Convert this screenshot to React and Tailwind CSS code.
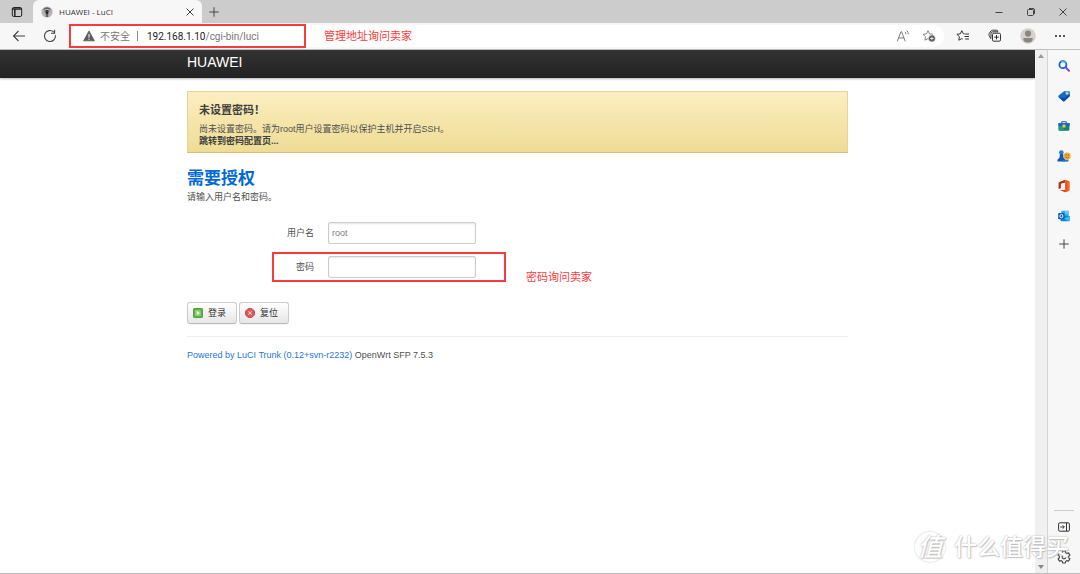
import React from 'react';

const TabMenuIcon = () => (
  <svg viewBox="0 0 12 12" className="h-3 w-3" fill="none" stroke="#222" strokeWidth="1">
    <rect x="1.3" y="1.5" width="9.4" height="9" rx="1.5" />
    <path d="M1.3 3h9.4M3.8 3v7.5" strokeWidth="1.5" />
  </svg>
);

const RouterIcon = () => (
  <svg viewBox="0 0 12 12" className="h-3 w-3">
    <circle cx="6" cy="6" r="5.6" fill="#b4b4b4" />
    <path d="M2.6 3.6Q6 .4 9.4 3.6M3.6 5.4Q6 3.2 8.4 5.4" fill="none" stroke="#333" strokeWidth="1" />
    <circle cx="6" cy="6.4" r="1.5" fill="#222" />
    <path d="M4.8 8h2.4v3H4.8z" fill="#666" />
  </svg>
);

const CloseIcon = ({ className }) => (
  <svg viewBox="0 0 10 10" className={className} fill="none" stroke="#444" strokeWidth="1">
    <path d="M1.5 1.5l7 7M8.5 1.5l-7 7" />
  </svg>
);

const PlusIcon = ({ className }) => (
  <svg viewBox="0 0 10 10" className={className} fill="none" stroke="#444" strokeWidth="1">
    <path d="M5 .3v9.4M.3 5h9.4" />
  </svg>
);

const BackIcon = () => (
  <svg viewBox="0 0 14 14" className="h-3.5 w-3.5" fill="none" stroke="#444" strokeWidth="1.1">
    <path d="M13 7H1.5M6.5 2l-5 5 5 5" />
  </svg>
);

const ReloadIcon = () => (
  <svg viewBox="0 0 14 14" className="h-3.5 w-3.5" fill="none" stroke="#444" strokeWidth="1.1">
    <path d="M12.4 6.3A5.5 5.5 0 1 1 10.8 3.1M11.6.8v3.5H8" />
  </svg>
);

const WarningIcon = () => (
  <svg viewBox="0 0 12 12" className="h-3 w-3 shrink-0">
    <path d="M6 .9L11.400 10.800H.6z" fill="#5c5c5c" stroke="#5c5c5c" strokeWidth=".8" strokeLinejoin="round" />
    <path d="M6 4v3.6M6 8.7v1.1" stroke="#fff" strokeWidth="1" />
  </svg>
);

const ReadAloudIcon = () => (
  <svg viewBox="0 0 13 13" className="h-3.5 w-3.5" fill="none" stroke="#777" strokeWidth=".9">
    <path d="M1.200 11.500L4.600 2.500h.6l3.400 9M2.300 8.300h5.200M8.300 2.600q.9.9.8 2.200M10 1.400q1.600 1.500 1.400 3.600" />
  </svg>
);

const STAR = 'M6 1.2l1.5 3.1 3.4.5-2.5 2.4.6 3.5L6 9.1l-3.1 1.6.6-3.5L1 4.8l3.5-.5z';

const AddFavoriteIcon = () => (
  <svg viewBox="0 0 14 13" className="h-3.5 w-3.5" fill="none">
    <path d={STAR} stroke="#777" strokeWidth=".9" />
    <circle cx="9.9" cy="9" r="3.4" fill="#555" stroke="#fff" strokeWidth=".5" />
    <path d="M9.9 7.2v3.6M8.1 9h3.6" stroke="#fff" strokeWidth=".8" />
  </svg>
);

const FavoritesIcon = () => (
  <svg viewBox="0 0 14 13" className="h-3.5 w-3.5" fill="none" stroke="#333" strokeWidth="1">
    <path d="M8.7 4.400l-1.400-.2L5.800 1.200 4.300 4.300.9 4.800l2.500 2.400-.6 3.500 3.100-1.600.8.4M9.200 4.500H13M8.500 7H13M9.200 9.500H13" />
  </svg>
);

const CollectionsIcon = () => (
  <svg viewBox="0 0 14 14" className="h-3.5 w-3.5" fill="none" stroke="#333" strokeWidth="1">
    <rect x="4.5" y="4.2" width="8" height="8" rx="1.3" />
    <path d="M8.5 6v4.4M6.300 8.200h4.400M3.100 10L1.100 6.500Q.6 5.300 1.300 4.200L3 2Q3.600 1.200 4.600 1.200h4q1 0 1.400 1.200M3 8.600V4.600Q3 2.800 4.800 2.800h5.200" />
  </svg>
);

const AvatarIcon = () => (
  <svg viewBox="0 0 16 16" className="h-4 w-4">
    <circle cx="8" cy="8" r="7.7" fill="#d3d0cd" />
    <circle cx="8" cy="5.600" r="3.100" fill="#8b8580" />
    <path d="M3.200 10h9.600q0 4.600-4.800 4.600T3.200 10z" fill="#8b8580" />
  </svg>
);

const MoreIcon = () => (
  <svg viewBox="0 0 12 12" className="h-3 w-3" fill="#222">
    <circle cx="2" cy="6" r="1" />
    <circle cx="6" cy="6" r="1" />
    <circle cx="10" cy="6" r="1" />
  </svg>
);

const SearchIcon = () => (
  <svg viewBox="0 0 12 12" className="h-3 w-3" fill="none">
    <circle cx="4.900" cy="4.700" r="3.500" stroke="#1c62d1" strokeWidth="1.800" />
    <path d="M3 1.800a3.500 3.500 0 0 1 5 1.300" stroke="#49a5ea" strokeWidth="1.800" />
    <path d="M7.600 7.400l1.600 1.500" stroke="#3e4bd0" strokeWidth="1.800" />
    <path d="M9 8.800l2 1.900" stroke="#9747ee" strokeWidth="2.200" strokeLinecap="round" />
  </svg>
);

const ShoppingIcon = () => (
  <svg viewBox="0 0 12 12" className="h-3 w-3">
    <path d="M6.4 1h4.2q1.2 0 1.2 1.2v3.5L6.6 11q-.8.8-1.7 0L.6 7.2q-.8-.8 0-1.600z" fill="#1769ce" />
    <path d="M.5 6.900l5.600 1.400 5.700-4v1.900L6.600 11q-.8.8-1.700 0z" fill="#0a49a5" />
    <path d="M6.400 1h4.200q1.200 0 1.200 1.200v2L7.500 3z" fill="#33a8e8" />
    <circle cx="9" cy="3.500" r="1.300" fill="#ffd34d" />
  </svg>
);

const ToolsIcon = () => (
  <svg viewBox="0 0 12 12" className="h-3 w-3">
    <path d="M3.700 3.200V1.700h4.600v1.500" fill="none" stroke="#175ca8" strokeWidth="1" />
    <rect x=".2" y="2.900" width="11.600" height="3.300" rx=".7" fill="#1a66c2" />
    <path d="M.6 6.100h10.800v3.700q0 1-1 1H1.600q-1 0-1-1z" fill="#168276" />
    <path d="M.6 6.100h5.200v4.700H1.600q-1 0-1-1z" fill="#219b79" />
    <rect x="4.500" y="4.500" width="3" height="3" rx=".5" fill="#f6c344" />
  </svg>
);

const GamesIcon = () => (
  <svg viewBox="0 0 12 12" className="h-3.5 w-3.5">
    <circle cx="3.700" cy="3" r="2" fill="#2480dc" />
    <path d="M2.600 4.200h2.600l.5 3.500q1.600.8 1.600 3.100H.2q0-2.300 1.800-3.100z" fill="#1259b4" />
    <circle cx="8.700" cy="6" r="3.100" fill="#f1ac37" />
    <circle cx="7.800" cy="5.100" r=".5" fill="#a85716" />
    <circle cx="9.700" cy="5.100" r=".5" fill="#a85716" />
    <path d="M7.200 6.900q1.500 1.500 3 0" fill="none" stroke="#a85716" strokeWidth=".6" />
    <path d="M4.800 9.200h5v1.600h-5z" fill="#197bdc" />
  </svg>
);

const OfficeIcon = () => (
  <svg viewBox="0 0 12 13" className="h-3.5 w-3">
    <path d="M7.200.2l3.700 1.200q.8.3.8 1.100v8q0 .8-.8 1.100l-3.700 1.200z" fill="#f26a21" />
    <path d="M7.200.2L1.500 2.500q-.9.4-.9 1.300v5.400q0 .6.500.3l1.800-1V4.300l4.300-1.100z" fill="#b52c1c" />
    <path d="M1.800 10.300h5.400v2.500z" fill="#e63b20" />
    <path d="M7.200 3.200v7.100H1.800l5.400 2.500 2-.6V1z" fill="#d83a1d" fillOpacity=".55" />
    <path d="M3 4.500l4-1.200v6.900H2.500L3 8.500z" fill="#f8f3f0" />
  </svg>
);

const OutlookIcon = () => (
  <svg viewBox="0 0 12 12" className="h-3 w-3">
    <path d="M3.300.8h7.400V7H3.300z" fill="#31a9eb" />
    <path d="M7 .8h3.700v3H7z" fill="#5fd0f8" />
    <path d="M2.500 5.500L12 6v4.300q0 .9-.9.9H3.400q-.9 0-.9-.9z" fill="#1682d4" />
    <path d="M12 6v4.300q0 .9-.9.9L5.500 8.500z" fill="#3bc0f0" />
    <rect x=".2" y="2.900" width="6.400" height="6.400" rx=".8" fill="#0b61b7" />
    <ellipse cx="3.400" cy="6.100" rx="1.500" ry="1.700" fill="none" stroke="#fff" strokeWidth=".9" />
  </svg>
);

const HidePanelIcon = () => (
  <svg viewBox="0 0 12 10" className="h-2.5 w-3" fill="none" stroke="#333" strokeWidth="1">
    <rect x=".6" y=".8" width="10.800" height="8.400" rx="1.300" />
    <path d="M8.500 .8v8.400M2.300 5h3.800M4.700 3.300L6.400 5 4.700 6.700" />
  </svg>
);

const GearIcon = () => (
  <svg viewBox="0 0 14 14" className="h-3.5 w-3.5" fill="none" stroke="#444" strokeWidth="1.100">
    <path d="M5.700 1h2.600l.4 1.700 1.200.7 1.700-.5 1.300 2.200L11.600 6.300v1.400l1.300 1.200-1.300 2.200-1.700-.5-1.200.7-.4 1.700H5.700l-.4-1.700-1.200-.7-1.700.5-1.300-2.200 1.300-1.200V6.300L1.100 5.100l1.300-2.200 1.700.5 1.200-.7z" />
    <circle cx="7" cy="7" r="1.900" />
  </svg>
);

const LoginIcon = () => (
  <svg viewBox="0 0 11 11" className="h-2.5 w-2.5">
    <rect x=".5" y=".5" width="10" height="10" rx="1" fill="#61b544" stroke="#43933a" />
    <rect x="2.500" y="2.500" width="6" height="6" fill="#8fd474" />
    <path d="M4.200 3.300l3.300 2.200-3.300 2.200z" fill="#fff" />
  </svg>
);

const ResetIcon = () => (
  <svg viewBox="0 0 11 11" className="h-2.5 w-2.5">
    <path d="M3.500.5h4l3 3v4l-3 3h-4l-3-3v-4z" fill="#dc5757" stroke="#c04848" />
    <path d="M3.700 3.700l3.600 3.600M7.300 3.700L3.700 7.300" stroke="#f7c5c5" strokeWidth="1.200" />
  </svg>
);

const sidebarApps = [
  { name: 'Search', icon: SearchIcon },
  { name: 'Shopping', icon: ShoppingIcon },
  { name: 'Tools', icon: ToolsIcon },
  { name: 'Games', icon: GamesIcon },
  { name: 'Office', icon: OfficeIcon },
  { name: 'Outlook', icon: OutlookIcon },
];

const TabStrip = () => (
  <div className="flex h-[23px] items-center bg-[#cccccc]">
    <button aria-label="Tab actions" className="flex w-[33px] justify-center">
      <TabMenuIcon />
    </button>
    <div className="flex h-full w-[169px] items-center rounded-t-md bg-[#f7f7f7] pl-2 pr-[7px]">
      <RouterIcon />
      <span className="ml-1.5 flex-1 font-['Open_Sans',sans-serif] text-[8px] text-[#333]">HUAWEI - LuCI</span>
      <button aria-label="Close tab"><CloseIcon className="h-2.5 w-2.5" /></button>
    </div>
    <button aria-label="New tab" className="ml-[7px]"><PlusIcon className="h-2.5 w-2.5" /></button>
    <div className="ml-auto flex items-center gap-[22px] pr-3">
      <button aria-label="Minimize">
        <svg viewBox="0 0 10 10" className="h-2.5 w-2.5" stroke="#444"><path d="M1.500 5.500h7" /></svg>
      </button>
      <button aria-label="Restore">
        <svg viewBox="0 0 10 10" className="h-2.5 w-2.5" fill="none" stroke="#444">
          <rect x="1.500" y="2.500" width="6" height="6" rx="1" />
          <path d="M3 1.500h4q1.500 0 1.500 1.500v4" />
        </svg>
      </button>
      <button aria-label="Close window"><CloseIcon className="h-2.5 w-2.5" /></button>
    </div>
  </div>
);

const Toolbar = () => (
  <div className="flex h-[27px] items-center border-b border-[#bdbdbd] bg-[#f7f7f7]">
    <div className="flex w-[70px] shrink-0 items-center gap-[17px] pl-3">
      <button aria-label="Back"><BackIcon /></button>
      <button aria-label="Reload"><ReloadIcon /></button>
    </div>
    <div className="relative flex h-[22px] flex-1 items-center rounded-full bg-white pl-[13px] pr-2">
      <WarningIcon />
      <span className="ml-[5px] text-[10px] text-[#777]">不安全</span>
      <span className="ml-[7px] h-2.5 w-px bg-[#888]" />
      <div className="ml-[9px] flex-1 font-[Roboto,sans-serif] text-[10px] text-[#777]">
        <span className="text-[#222]">192.168.1.10</span>/cgi-bin/luci
      </div>
      <div className="flex gap-3">
        <button aria-label="Read aloud"><ReadAloudIcon /></button>
        <button aria-label="Add to favorites"><AddFavoriteIcon /></button>
      </div>
      <div className="absolute -left-px h-6 w-[237px] border-2 border-[#f83c3c]" />
      <span className="absolute left-[254px] text-[11px] text-[#f83c3c]">管理地址询问卖家</span>
    </div>
    <div className="flex items-center gap-[18px] pl-3 pr-3.5">
      <button aria-label="Favorites"><FavoritesIcon /></button>
      <button aria-label="Collections"><CollectionsIcon /></button>
      <button aria-label="Profile"><AvatarIcon /></button>
      <button aria-label="Settings and more"><MoreIcon /></button>
    </div>
  </div>
);

const Sidebar = () => (
  <aside className="flex w-[33px] shrink-0 flex-col items-center border-l border-[#d4d4d4] bg-[#f7f7f7] pb-[9px] pt-1">
    {sidebarApps.map((app) => (
      <button key={app.name} aria-label={app.name} className="mb-[7px] flex h-[23px] items-center last:mb-0">
        <app.icon />
      </button>
    ))}
    <button aria-label="Customize" className="flex h-5 items-center"><PlusIcon className="h-2.5 w-2.5" /></button>
    <div className="mt-auto w-5 border-t border-[#cfcfcf]" />
    <button aria-label="Hide sidebar" className="mt-[11px]"><HidePanelIcon /></button>
    <button aria-label="Sidebar settings" className="mt-[18px]"><GearIcon /></button>
  </aside>
);

const Scrollbar = () => (
  <div className="flex w-3 shrink-0 flex-col items-center justify-between bg-[#f0f0f0] py-1">
    <svg viewBox="0 0 6 4" className="h-1 w-1.5" fill="#999"><path d="M0 4l3-4 3 4z" /></svg>
    <svg viewBox="0 0 6 4" className="h-1 w-1.5" fill="#888"><path d="M0 0l3 4 3-4z" /></svg>
  </div>
);

const inputClass =
  'h-[22px] w-[148px] rounded-[2px] border border-[#ccc] bg-white px-[3px] text-[9px] text-[#808080] shadow-[inset_0_1px_2px_rgba(0,0,0,0.1)] outline-none';

const buttonClass =
  'flex h-[22px] w-[50px] items-center gap-[5px] rounded-[3px] border border-[#ccc] border-b-[#bbb] bg-linear-to-b from-white to-[#e6e6e6] pl-[5px] text-[9px] text-[#333] shadow-[0_1px_1px_rgba(0,0,0,0.05)]';

const LoginPage = () => (
  <main className="min-w-0 flex-1 overflow-hidden bg-white text-[9px] leading-3 text-[#505050]">
    <header className="h-7 bg-linear-to-b from-[#333] to-[#222] shadow-[0_1px_2px_rgba(0,0,0,0.3)]">
      <div className="mx-auto max-w-[661px]">
        <a href="#home" className="text-[14px] leading-6 text-white">HUAWEI</a>
      </div>
    </header>

    <div className="mx-auto mt-[13px] max-w-[661px]">
      <div className="border border-[#e6d596] border-b-[#cfc07f] bg-linear-to-b from-[#fceec1] to-[#eedc94] px-[11px] pb-[5px] pt-2.5">
        <h4 className="text-[11px] font-bold leading-4 text-[#404040]">未设置密码！</h4>
        <p className="mt-[5px]">尚未设置密码。请为root用户设置密码以保护主机并开启SSH。</p>
        <a href="#password" className="block font-bold text-[#404040]">跳转到密码配置页...</a>
      </div>

      <form>
        <h2 className="mt-3.5 text-[17px] font-bold leading-6 text-[#0069d6]">需要授权</h2>
        <p>请输入用户名和密码。</p>

        <div className="mt-[19px] flex items-center">
          <label htmlFor="username" className="w-[127px] text-right">用户名</label>
          <input id="username" type="text" defaultValue="root" className={`${inputClass} ml-3.5`} />
        </div>
        <div className="relative mt-3 flex items-center">
          <label htmlFor="password" className="w-[127px] text-right">密码</label>
          <input id="password" type="password" className={`${inputClass} ml-3.5`} />
          <div className="pointer-events-none absolute -top-1 left-[85px] h-[30px] w-[234px] border-2 border-[#f83c3c]" />
          <span className="absolute left-[339px] top-[13px] text-[11px] leading-4 text-[#f83c3c]">密码询问卖家</span>
        </div>

        <div className="mt-6 flex gap-0.5">
          <button type="submit" className={buttonClass}><LoginIcon />登录</button>
          <button type="reset" className={buttonClass}><ResetIcon />复位</button>
        </div>
      </form>

      <footer className="mt-3 border-t border-[#eee] pt-3">
        <a href="#luci" className="text-[#1f76da]">Powered by LuCI Trunk (0.12+svn-r2232)</a> OpenWrt SFP 7.5.3
      </footer>
    </div>
  </main>
);

const Watermark = () => (
  <div className="pointer-events-none absolute bottom-2.5 right-[11px] flex items-center gap-[9px] text-[23px] font-medium leading-8 text-white [text-shadow:0_0_2px_#aaa,1px_1px_1px_#ccc]">
    <span className="flex h-[30px] w-[30px] items-center justify-center rounded-full border border-white text-[25px] italic shadow-[0_0_2px_#bbb]">值</span>
    <span>什么值得买</span>
  </div>
);

export default function App() {
  return (
    <div className="relative flex h-screen flex-col overflow-hidden border-b border-[#bbb] font-['Liberation_Sans','Noto_Sans_CJK_SC',sans-serif]">
      <TabStrip />
      <Toolbar />
      <div className="flex min-h-0 flex-1">
        <LoginPage />
        <Scrollbar />
        <Sidebar />
      </div>
      <Watermark />
    </div>
  );
}
